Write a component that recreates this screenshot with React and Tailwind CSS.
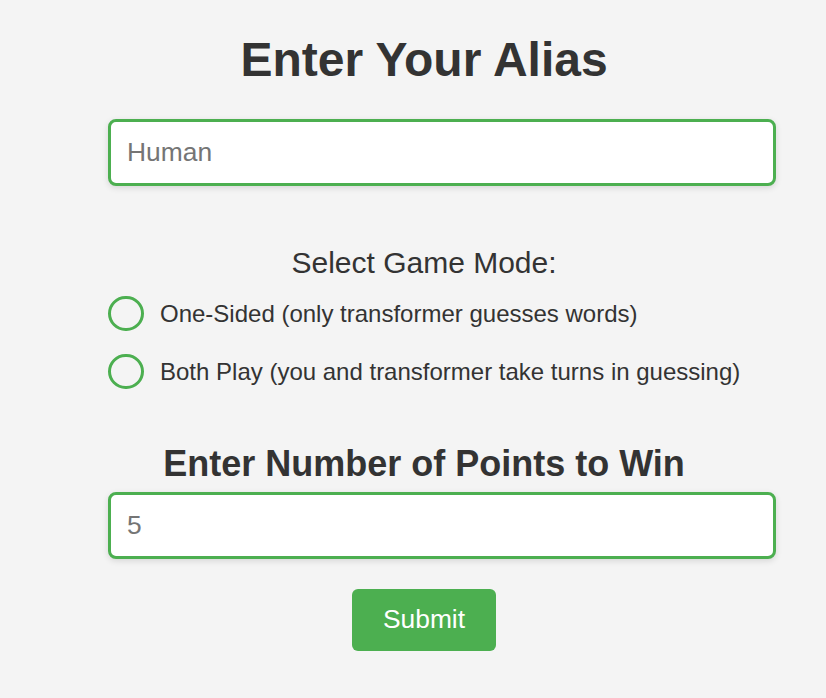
import React from 'react';

export default function App() {
  const [alias, setAlias] = React.useState('');
  const [mode, setMode] = React.useState('');
  const [points, setPoints] = React.useState('');

  const modes = [
    ['one', 'One-Sided (only transformer guesses words)'],
    ['both', 'Both Play (you and transformer take turns in guessing)'],
  ];

  return (
    <div className="min-h-[698px] bg-[#f4f4f4] text-[#333] font-['Liberation_Sans',Arial,sans-serif] overflow-hidden">
      <div className="ml-[108px] w-[632px] pt-[32px]">
        <h1 className="text-center text-[48px] font-bold leading-[55px]">Enter Your Alias</h1>

        <input
          type="text"
          value={alias}
          onChange={(e) => setAlias(e.target.value)}
          placeholder="Human"
          className="mt-[32px] block w-[668px] h-[67px] px-[16px] text-[26.4px] bg-white border-[3px] border-[#4caf50] rounded-[8px] shadow-[0_2px_6px_rgba(0,0,0,0.12)] outline-none placeholder:text-[#757575]"
        />

        <div className="mt-[60px] text-center text-[30px] leading-[34px]">Select Game Mode:</div>

        <div className="mt-[16px] flex flex-col gap-[23px]">
          {modes.map(([k, label]) => (
            <label key={k} className="flex items-center cursor-pointer whitespace-nowrap">
              <span className="w-[36px] h-[35px] rounded-full border-[3px] border-[#4caf50] flex items-center justify-center mr-[16px] shrink-0">
                {mode === k && <span className="w-[16px] h-[16px] rounded-full bg-[#4caf50]" />}
              </span>
              <input type="radio" name="mode" className="hidden" checked={mode === k} onChange={() => setMode(k)} />
              <span className="text-[24px] leading-[34px]">{label}</span>
            </label>
          ))}
        </div>

        <h2 className="mt-[54px] text-center text-[36px] font-bold leading-[41px]">Enter Number of Points to Win</h2>

        <input
          type="number"
          value={points}
          onChange={(e) => setPoints(e.target.value)}
          placeholder="5"
          className="mt-[8px] block w-[668px] h-[67px] px-[16px] text-[26.4px] bg-white border-[3px] border-[#4caf50] rounded-[8px] shadow-[0_2px_6px_rgba(0,0,0,0.12)] outline-none placeholder:text-[#757575]"
        />

        <div className="mt-[30px] flex justify-center">
          <button className="w-[144px] h-[62px] bg-[#4caf50] text-white text-[26.4px] rounded-[6px]">Submit</button>
        </div>
      </div>
    </div>
  );
}
